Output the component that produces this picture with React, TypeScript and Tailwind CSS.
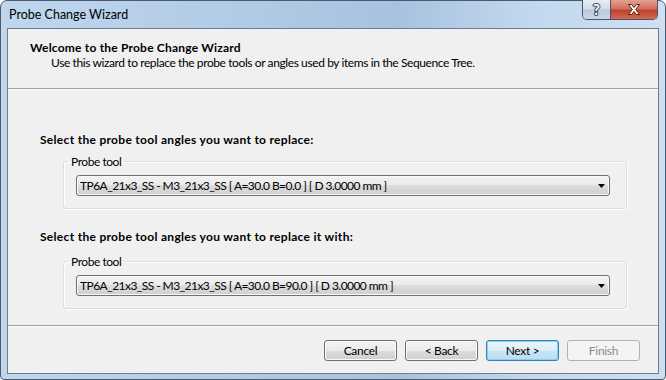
const FONT = { fontFamily: 'Lato, "Noto Sans", sans-serif' };

function Combo({ value }: { value: string }) {
  return (
    <div className="flex h-[21px] w-[534px] items-center rounded-[3px] border border-[#707070] bg-[linear-gradient(#f2f2f2_0%,#ebebeb_50%,#dddddd_50%,#cfcfcf_100%)] pl-[3px] pr-[4px] shadow-[inset_0_0_0_1px_#f8f8f8]">
      <span className="flex-1 truncate leading-[15px] tracking-[-0.55px]">{value}</span>
      <svg width="7" height="4" viewBox="0 0 7 4">
        <path d="M0 0h7L3.5 4z" fill="#000" />
      </svg>
    </div>
  );
}

function Group({ value }: { value: string }) {
  return (
    <fieldset className="ml-[23px] w-[564px] rounded-[3px] border border-[#d5dfe5] pb-[12px] pl-[12px] pt-[6px] shadow-[inset_1px_1px_0_#ffffff,1px_1px_0_#ffffff]">
      <legend className="-ml-[8px] px-[3px] leading-[15px] tracking-[-0.45px]">Probe tool</legend>
      <Combo value={value} />
    </fieldset>
  );
}

function Btn({ label, kind = "normal" }: { label: string; kind?: "normal" | "default" | "disabled" }) {
  let cls =
    "border-[#707070] bg-[linear-gradient(#f2f2f2_0%,#ebebeb_50%,#dddddd_50%,#cfcfcf_100%)] shadow-[inset_0_0_0_1px_#fbfbfb]";
  if (kind === "default")
    cls =
      "border-[#3c7fb1] bg-[linear-gradient(#ecf6fc_0%,#dcedf8_50%,#cbe5f4_50%,#bcdcef_100%)] shadow-[inset_0_0_0_1px_#7fd3f6]";
  if (kind === "disabled") cls = "border-[#adb2b5] bg-[#f4f4f4] text-[#8a8a8a]";
  return (
    <div
      className={`flex h-[21px] w-[73px] items-center justify-center rounded-[3px] border leading-[15px] tracking-[-0.3px] ${cls}`}
    >
      {label}
    </div>
  );
}

export default function App() {
  return (
    <div className="h-[380px] w-[666px] bg-white text-[12px] text-black" style={FONT}>
      <div className="flex h-full flex-col rounded-t-[7px] rounded-b-[4px] border border-[#4e5a69] bg-[linear-gradient(90deg,#bfd6ee_0%,#b2cbe6_35%,#a7c2e0_60%,#c3d8ee_80%,#cde0f3_100%)]">
        {/* title bar */}
        <div className="flex h-[27px] items-start">
          <div className="pl-[8px] pt-[6px] text-[12.5px] leading-[16px] text-[#000]">Probe Change Wizard</div>
          <div className="ml-auto mr-[7px] -mt-px flex h-[20px] overflow-hidden rounded-b-[5px] border border-t-0 border-[#4a5464]">
            <div className="flex w-[28px] items-center justify-center border-r border-[#4a5464] bg-[linear-gradient(#e6edf5_0%,#d3dee9_45%,#bccbdc_55%,#c9d7e6_100%)]">
              <span
                className="text-[15px] font-bold leading-none text-white"
                style={{ WebkitTextStroke: "2px #3a4b60", paintOrder: "stroke fill" }}
              >
                ?
              </span>
            </div>
            <div className="flex w-[46px] items-center justify-center bg-[linear-gradient(#e4a191_0%,#d2705c_45%,#c0412a_55%,#d06a55_100%)]">
              <svg width="14" height="11" viewBox="0 0 14 11">
                <path
                  d="M1.5 0.5h3L7 3.5l2.5-3h3L8.7 5.5l3.8 5h-3L7 7.5l-2.5 3h-3L5.3 5.5z"
                  fill="#fff"
                  stroke="#5a1e14"
                  strokeWidth="1"
                  strokeLinejoin="round"
                />
              </svg>
            </div>
          </div>
        </div>

        {/* client area */}
        <div className="mx-[6px] mb-[5px] flex flex-1 flex-col border border-[#6f7e8f] bg-[#f0f0f0]">
          <div className="h-[60px] border-b border-[#a0a0a0] pl-[22px] pt-[11px]">
            <div className="font-bold leading-[15px] tracking-[0.2px]">Welcome to the Probe Change Wizard</div>
            <div className="ml-[21px] leading-[15px] tracking-[-0.4px]">
              Use this wizard to replace the probe tools or angles used by items in the Sequence Tree.
            </div>
          </div>

          <div className="flex-1 border-t border-white pl-[32px] pt-[42px]">
            <div className="font-bold leading-[15px] tracking-[0.3px]">
              Select the probe tool angles you want to replace:
            </div>
            <div className="mt-[7px]">
              <Group value="TP6A_21x3_SS - M3_21x3_SS [ A=30.0 B=0.0 ] [ D 3.0000 mm ]" />
            </div>
            <div className="mt-[20px] font-bold leading-[15px] tracking-[0.3px]">
              Select the probe tool angles you want to replace it with:
            </div>
            <div className="mt-[10px]">
              <Group value="TP6A_21x3_SS - M3_21x3_SS [ A=30.0 B=90.0 ] [ D 3.0000 mm ]" />
            </div>
          </div>

          <div className="h-[48px] border-t border-[#a0a0a0]">
            <div className="flex justify-end gap-[8px] border-t border-white pr-[18px] pt-[13px]">
              <Btn label="Cancel" />
              <Btn label="< Back" />
              <Btn label="Next >" kind="default" />
              <Btn label="Finish" kind="disabled" />
            </div>
          </div>
        </div>
      </div>
    </div>
  );
}
